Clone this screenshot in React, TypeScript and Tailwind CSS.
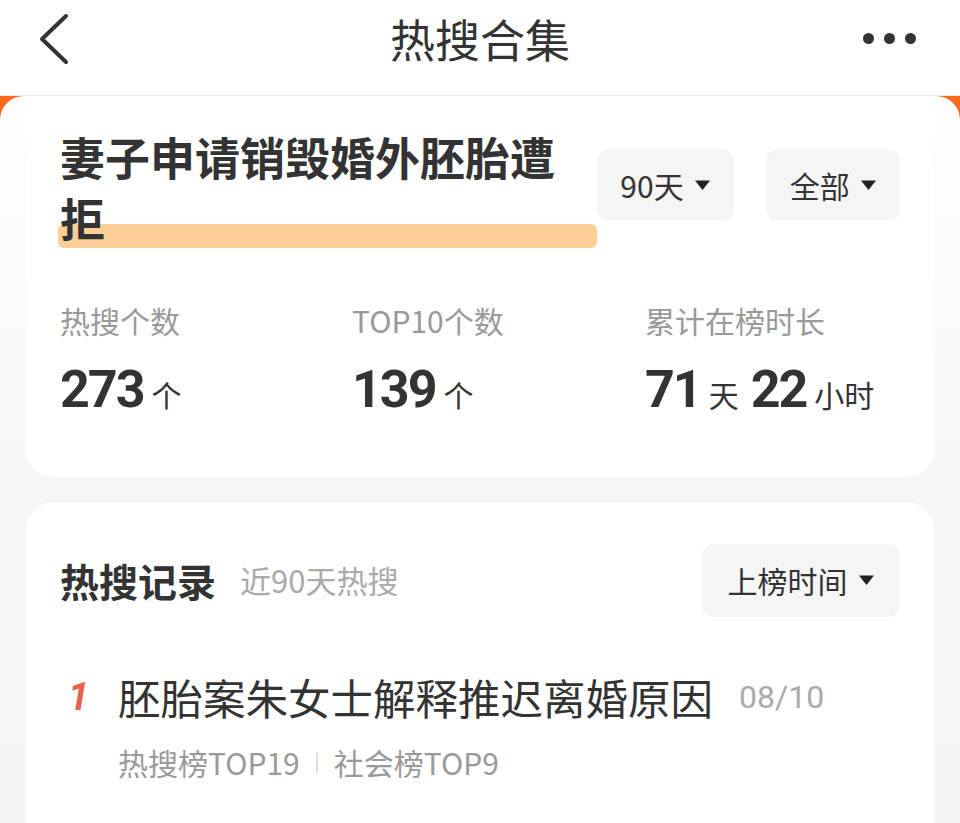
import React from "react";

const FONT = { fontFamily: '"Noto Sans CJK SC", "Noto Sans", sans-serif' };
const NUM = { fontFamily: 'Roboto, "Noto Sans CJK SC", sans-serif' };

function Caret() {
  return (
    <svg width="17" height="13" viewBox="0 0 17 13" className="ml-[10px]">
      <path d="M1 1.5h15L8.5 11z" fill="#222" />
    </svg>
  );
}

function Pill({ label, className = "" }: { label: string; className?: string }) {
  return (
    <div
      className={`flex h-[72px] items-center justify-center rounded-[12px] bg-[#f5f5f5] text-[30px] text-[#333] ${className}`}
    >
      {label}
      <Caret />
    </div>
  );
}

const STATS = [
  { label: "热搜个数", parts: [["273", true], ["个", false]] },
  { label: "TOP10个数", parts: [["139", true], ["个", false]] },
  { label: "累计在榜时长", parts: [["71", true], ["天", false], ["22", true], ["小时", false]] },
] as const;

export default function App() {
  return (
    <div className="h-[823px] w-full overflow-hidden bg-[#f4f4f4]" style={FONT}>
      {/* top bar */}
      <div className="grid h-[96px] grid-cols-[1fr_auto_1fr] items-center border-b border-[#ececec] bg-white pb-[18px]">
        <div className="pl-[36px]">
          <svg width="36" height="52" viewBox="0 0 36 52">
            <path d="M30 3L6 26l24 23" fill="none" stroke="#333" strokeWidth="4" strokeLinecap="round" strokeLinejoin="round" />
          </svg>
        </div>
        <div className="text-[45px] leading-none text-[#333]">热搜合集</div>
        <div className="flex justify-end gap-[10px] pr-[44px]">
          <span className="h-[11px] w-[11px] rounded-full bg-[#333]" />
          <span className="h-[11px] w-[11px] rounded-full bg-[#333]" />
          <span className="h-[11px] w-[11px] rounded-full bg-[#333]" />
        </div>
      </div>

      {/* body */}
      <div className="bg-[#f76a1f]">
        <div className="rounded-t-[24px] bg-gradient-to-b from-white via-[#f6f6f6] to-[#f4f4f4] px-[26px] pb-[40px]">
          {/* summary card */}
          <div className="h-[381px] rounded-[28px] bg-white px-[34px] pt-[30px]">
            <div className="flex items-start">
              <div className="relative w-[538px]">
                <div className="absolute bottom-0 left-[-2px] right-0 h-[24px] rounded-[6px] bg-[#fdcf98]" />
                <h1 className="relative w-[520px] text-[45px] font-bold leading-[61px] text-[#333]">
                  妻子申请销毁婚外胚胎遭拒
                </h1>
              </div>
              <Pill label="90天" className="mt-[23px] w-[138px]" />
              <Pill label="全部" className="ml-[32px] mt-[23px] w-[134px]" />
            </div>

            <div className="mt-[54px] grid grid-cols-[292px_293px_1fr]">
              {STATS.map((s) => (
                <div key={s.label}>
                  <div className="text-[30px] leading-[36px] text-[#999]">{s.label}</div>
                  <div className="mt-[22px] flex items-baseline text-[#333]">
                    {s.parts.map(([t, big], i) =>
                      big ? (
                        <span
                          key={i}
                          className="text-[52px] font-bold leading-[60px] tracking-[-2px]"
                          style={NUM}
                        >
                          {t}
                        </span>
                      ) : (
                        <span key={i} className="ml-[8px] mr-[12px] text-[30px] leading-[60px]">
                          {t}
                        </span>
                      )
                    )}
                  </div>
                </div>
              ))}
            </div>
          </div>

          {/* records card */}
          <div className="mt-[25px] h-[360px] rounded-[28px] bg-white px-[34px] pt-[42px]">
            <div className="flex items-center">
              <div className="text-[39px] font-bold text-[#333]">热搜记录</div>
              <div className="ml-[24px] text-[31px] text-[#aaa]">近90天热搜</div>
              <Pill label="上榜时间" className="ml-auto h-[73px] w-[198px]" />
            </div>

            <div className="mt-[55px] flex items-center">
              <span
                className="w-[58px] pl-[8px] text-[38px] font-bold italic leading-[50px] text-[#e8604c]"
                style={NUM}
              >
                1
              </span>
              <span className="text-[42.5px] leading-[50px] text-[#333]">胚胎案朱女士解释推迟离婚原因</span>
              <span className="ml-[26px] text-[32px] text-[#aaa]" style={NUM}>08/10</span>
            </div>
            <div className="ml-[58px] mt-[18px] flex items-center text-[30px] text-[#999]">
              <span>热搜榜TOP19</span>
              <span className="mx-[16px] h-[20px] w-[2px] bg-[#ddd]" />
              <span>社会榜TOP9</span>
            </div>
          </div>
        </div>
      </div>
    </div>
  );
}
